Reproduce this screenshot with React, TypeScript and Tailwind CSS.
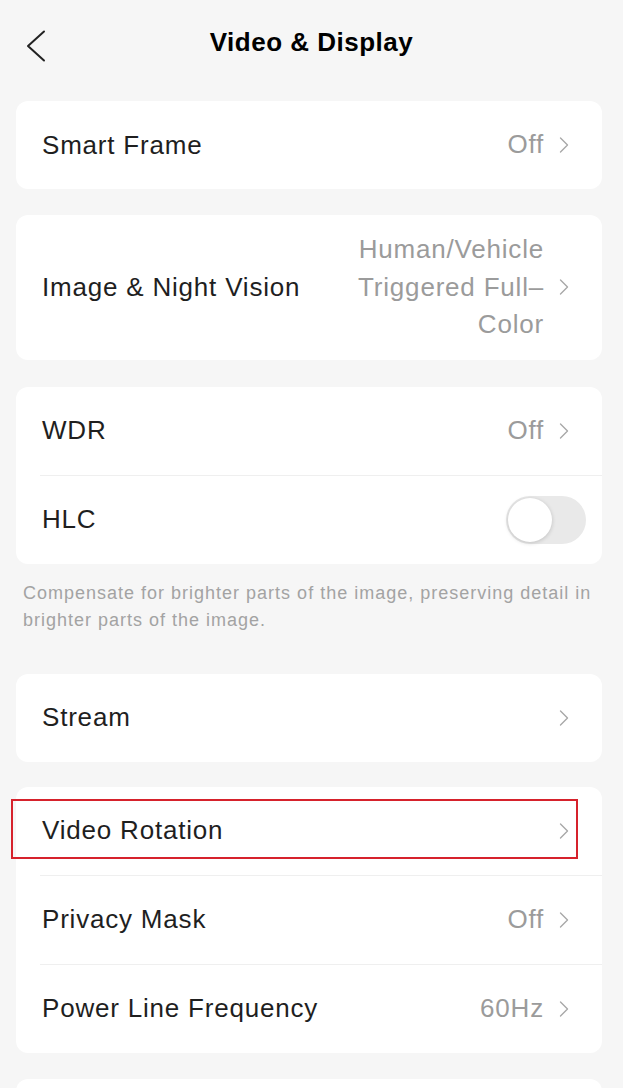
import type { ReactNode } from "react";

const font = { fontFamily: '"Liberation Sans", Arial, sans-serif' };

function Chevron() {
  return (
    <svg width="10" height="16" viewBox="0 0 10 16" fill="none" className="shrink-0">
      <polyline points="1.5,1 8.5,8 1.5,15" stroke="#a8a8a8" strokeWidth="1.4" strokeLinecap="round" strokeLinejoin="round" />
    </svg>
  );
}

function Divider() {
  return <div className="ml-[24px] border-t border-[#efefef]" />;
}

function Row({ label, value, children }: { label: string; value?: ReactNode; children?: ReactNode }) {
  return (
    <div className="relative flex min-h-[88px] items-center justify-between py-4 pl-[26px] pr-[33px]">
      <span className="text-[26px] tracking-[0.8px] text-[#1f1f1f]">{label}</span>
      <div className="flex items-center gap-[15px]">
        {value && <div className="text-right text-[26px] leading-[37.5px] tracking-[0.8px] text-[#9b9b9b]">{value}</div>}
        <Chevron />
      </div>
      {children}
    </div>
  );
}

function Toggle() {
  return (
    <div className="flex h-[48px] w-[80px] items-center rounded-full bg-[#e9e9e9] px-[2px]">
      <div className="h-[44px] w-[44px] rounded-full bg-white shadow-[0_1px_4px_rgba(0,0,0,0.18)]" />
    </div>
  );
}

function Card({ children, className = "" }: { children: ReactNode; className?: string }) {
  return <div className={`overflow-hidden rounded-[12px] bg-white ${className}`}>{children}</div>;
}

export default function App() {
  return (
    <div className="min-h-screen bg-[#f6f6f6] pb-10" style={font}>
      {/* top bar */}
      <header className="grid h-[84px] grid-cols-[1fr_auto_1fr] items-center">
        <button className="flex items-center pl-[26px] pt-[8px]">
          <svg width="20" height="32" viewBox="0 0 20 32" fill="none">
            <polyline points="18,1.5 2,16 18,30.5" stroke="#222" strokeWidth="2" strokeLinecap="round" strokeLinejoin="round" />
          </svg>
        </button>
        <h1 className="text-[26px] font-bold tracking-[0.5px] text-black">Video &amp; Display</h1>
        <div />
      </header>

      <main className="flex flex-col pl-4 pr-[21px] pt-[17px]">
        <Card>
          <Row label="Smart Frame" value="Off" />
        </Card>

        <Card className="mt-[26px]">
          <Row
            label="Image & Night Vision"
            value={
              <>
                Human/Vehicle
                <br />
                Triggered Full–
                <br />
                Color
              </>
            }
          />
        </Card>

        <Card className="mt-[27px]">
          <Row label="WDR" value="Off" />
          <Divider />
          <div className="flex h-[88px] items-center justify-between pl-[26px] pr-[16px]">
            <span className="text-[26px] tracking-[0.8px] text-[#1f1f1f]">HLC</span>
            <Toggle />
          </div>
        </Card>

        <p className="mt-4 whitespace-nowrap pl-[7px] text-[18px] leading-[27px] tracking-[1px] text-[#a3a3a3]">
          Compensate for brighter parts of the image, preserving detail in
          <br />
          brighter parts of the image.
        </p>

        <Card className="mt-10">
          <Row label="Stream" />
        </Card>

        <Card className="mt-[25px] overflow-visible">
          <Row label="Video Rotation">
            <div className="pointer-events-none absolute -left-[5px] right-[24px] top-[12px] bottom-[16px] border-2 border-[#d6222c]" />
          </Row>
          <Divider />
          <Row label="Privacy Mask" value="Off" />
          <Divider />
          <Row label="Power Line Frequency" value="60Hz" />
        </Card>

        <Card className="mt-[26px]">
          <div className="h-[88px]" />
        </Card>
      </main>
    </div>
  );
}
